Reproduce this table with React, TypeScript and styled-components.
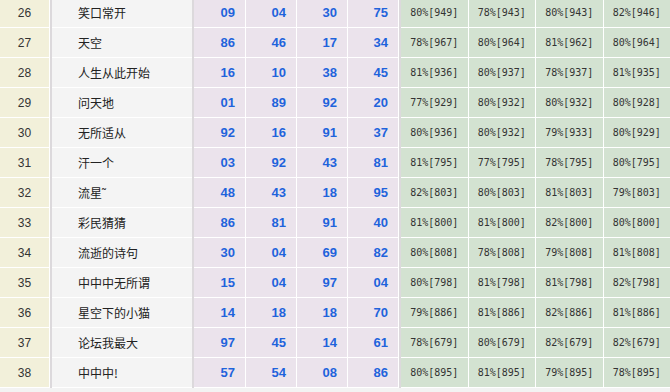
import React from 'react';
import styled, { createGlobalStyle } from 'styled-components';

const GlobalStyle = createGlobalStyle`
  html, body {
    margin: 0;
    padding: 0;
    background: #f3f3f3;
  }
  body {
    font-family: "Liberation Sans", "Noto Sans CJK SC", sans-serif;
    overflow: hidden;
  }
`;

type Row = {
  no: number;
  name: string;
  nums: string[];
  rates: string[];
};

const rows: Row[] = [
  { no: 26, name: '笑口常开', nums: ['09', '04', '30', '75'], rates: ['80%[949]', '78%[943]', '80%[943]', '82%[946]'] },
  { no: 27, name: '天空', nums: ['86', '46', '17', '34'], rates: ['78%[967]', '80%[964]', '81%[962]', '80%[964]'] },
  { no: 28, name: '人生从此开始', nums: ['16', '10', '38', '45'], rates: ['81%[936]', '80%[937]', '78%[937]', '81%[935]'] },
  { no: 29, name: '问天地', nums: ['01', '89', '92', '20'], rates: ['77%[929]', '80%[932]', '80%[932]', '80%[928]'] },
  { no: 30, name: '无所适从', nums: ['92', '16', '91', '37'], rates: ['80%[936]', '80%[932]', '79%[933]', '80%[929]'] },
  { no: 31, name: '汗一个', nums: ['03', '92', '43', '81'], rates: ['81%[795]', '77%[795]', '78%[795]', '80%[795]'] },
  { no: 32, name: '流星˜', nums: ['48', '43', '18', '95'], rates: ['82%[803]', '80%[803]', '81%[803]', '79%[803]'] },
  { no: 33, name: '彩民猜猜', nums: ['86', '81', '91', '40'], rates: ['81%[800]', '81%[800]', '82%[800]', '80%[800]'] },
  { no: 34, name: '流逝的诗句', nums: ['30', '04', '69', '82'], rates: ['80%[808]', '78%[808]', '79%[808]', '81%[808]'] },
  { no: 35, name: '中中中无所谓', nums: ['15', '04', '97', '04'], rates: ['80%[798]', '81%[798]', '81%[798]', '82%[798]'] },
  { no: 36, name: '星空下的小猫', nums: ['14', '18', '18', '70'], rates: ['79%[886]', '81%[886]', '82%[886]', '81%[886]'] },
  { no: 37, name: '论坛我最大', nums: ['97', '45', '14', '61'], rates: ['78%[679]', '80%[679]', '82%[679]', '82%[679]'] },
  { no: 38, name: '中中中!', nums: ['57', '54', '08', '86'], rates: ['80%[895]', '81%[895]', '79%[895]', '78%[895]'] },
];

const Table = styled.div`
  display: flex;
  flex-direction: column;
  width: 670px;
  margin-top: -2px;
  background: #ffffff;
`;

const TableRow = styled.div`
  display: flex;
  height: 30px;
`;

const Cell = styled.div`
  height: 29px;
  margin-bottom: 1px;
  display: flex;
  align-items: center;
  box-sizing: border-box;
  white-space: nowrap;
`;

const NoCell = styled(Cell)`
  width: 49px;
  justify-content: center;
  background: #f2f0da;
  color: #333333;
  font-size: 12px;
`;

const Divider = styled.div<{ $lead?: number }>`
  width: 2px;
  margin-left: ${p => p.$lead ?? 0}px;
  background: #dcd9dc;
`;

const NameCell = styled(Cell)`
  width: 140px;
  padding-left: 26px;
  background: #f4f4f4;
  color: #222222;
  font-family: "Noto Sans CJK SC", sans-serif;
  font-size: 12px;
`;

const Group = styled.div`
  display: flex;
  gap: 1px;
`;

const NumCell = styled(Cell)<{ $w: number }>`
  width: ${p => p.$w}px;
  justify-content: flex-end;
  padding-right: 10px;
  background: #ebe3ec;
  color: #1f63dc;
  font-family: "Liberation Sans", sans-serif;
  font-weight: bold;
  font-size: 13px;
`;

const RateGroup = styled(Group)`
  flex: 1;
`;

const RateCell = styled(Cell)`
  flex: 1;
  justify-content: center;
  background: #d3e2d1;
  color: #333333;
  font-family: "DejaVu Sans Mono", monospace;
  font-size: 10px;
`;

const numWidths = [51, 50, 50, 50];

export default function App() {
  return (
    <>
      <GlobalStyle />
      <Table>
        {rows.map(r => (
          <TableRow key={r.no}>
            <NoCell>{r.no}</NoCell>
            <Divider $lead={1} />
            <NameCell>{r.name}</NameCell>
            <Divider />
            <Group>
              {r.nums.map((n, i) => (
                <NumCell key={i} $w={numWidths[i]}>{n}</NumCell>
              ))}
            </Group>
            <Divider $lead={1} />
            <RateGroup>
              {r.rates.map((t, i) => (
                <RateCell key={i}>{t}</RateCell>
              ))}
            </RateGroup>
          </TableRow>
        ))}
      </Table>
    </>
  );
}
